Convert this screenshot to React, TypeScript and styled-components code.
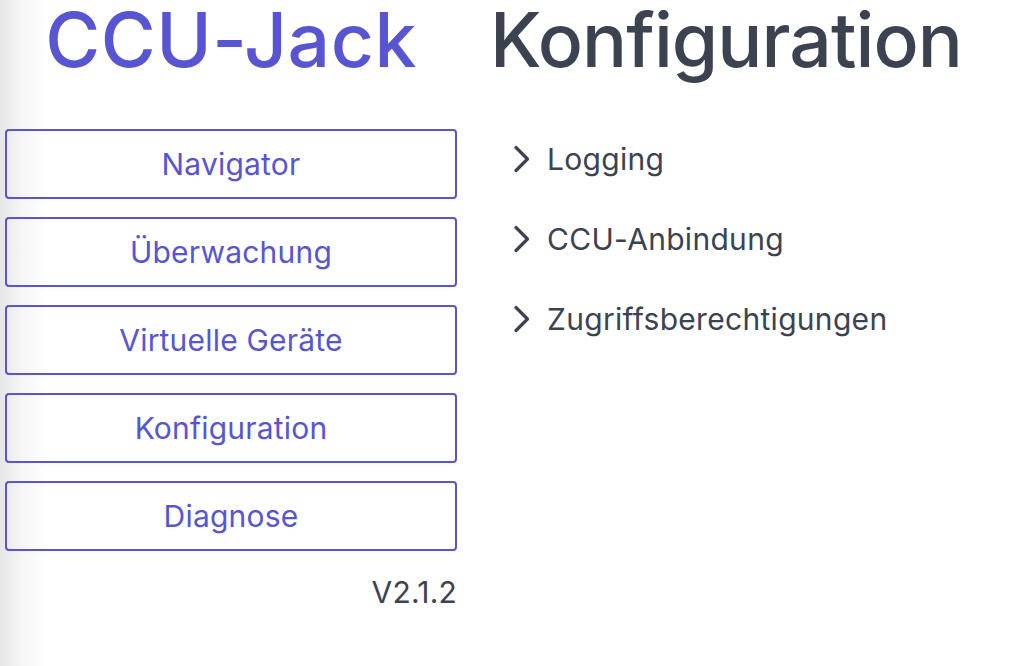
import React from "react";
import styled, { createGlobalStyle } from "styled-components";

const Global = createGlobalStyle`
  html, body {
    margin: 0;
    padding: 0;
    height: 100%;
  }
  body {
    font-family: Inter, "Noto Sans", sans-serif;
    background: linear-gradient(to right, #e6e6e6 0px, #f6f6f6 22px, #ffffff 48px);
    color: #3c4350;
    -webkit-font-smoothing: antialiased;
  }
`;

const Page = styled.div`
  display: flex;
  flex-direction: column;
  padding-left: 5px;
  min-height: 666px;
  box-sizing: border-box;
`;

const Header = styled.header`
  display: grid;
  grid-template-columns: 452px 1fr;
  column-gap: 33px;
  margin-top: -6px;
  margin-bottom: 43px;
`;

const Body = styled.main`
  display: grid;
  grid-template-columns: 452px 1fr;
  column-gap: 33px;
  align-items: start;
`;

const Title = styled.h1<{ $accent?: boolean }>`
  margin: 0;
  font-size: 75px;
  font-weight: 500;
  line-height: 92px;
  letter-spacing: ${(p) => (p.$accent ? "0.5px" : "-0.95px")};
  white-space: nowrap;
  color: ${(p) => (p.$accent ? "#5855d3" : "#3c4350")};
  text-align: ${(p) => (p.$accent ? "center" : "left")};
`;

const Sidebar = styled.nav`
  display: flex;
  flex-direction: column;
  gap: 18px;
`;

const NavButton = styled.button`
  display: flex;
  align-items: center;
  justify-content: center;
  height: 70px;
  padding: 0;
  box-sizing: border-box;
  border: 2px solid #5855d3;
  border-radius: 4px;
  background: transparent;
  color: #5855d3;
  font-family: Inter, "Noto Sans", sans-serif;
  font-size: 30px;
  letter-spacing: 0.2px;
  font-weight: 400;
  cursor: pointer;
`;

const Version = styled.div`
  margin-top: 23px;
  text-align: right;
  font-size: 30px;
  letter-spacing: 0.2px;
  color: #3c4350;
`;

const Sections = styled.div`
  display: flex;
  flex-direction: column;
  gap: 44px;
  padding: 12px 0 0 23px;
`;

const SectionRow = styled.div`
  display: flex;
  align-items: center;
  gap: 16px;
  height: 36px;
  font-size: 30px;
  letter-spacing: 0.3px;
  color: #3c4350;
`;

const Chevron = () => (
  <svg width="18" height="28" viewBox="0 0 18 28" fill="none">
    <path
      d="M3 2.5 L14.5 14 L3 25.5"
      stroke="#3c4350"
      strokeWidth="3.2"
      strokeLinecap="round"
      strokeLinejoin="round"
    />
  </svg>
);

const navItems = ["Navigator", "Überwachung", "Virtuelle Geräte", "Konfiguration", "Diagnose"];
const sections = ["Logging", "CCU-Anbindung", "Zugriffsberechtigungen"];

export default function App() {
  return (
    <>
      <Global />
      <Page>
        <Header>
          <Title $accent>CCU-Jack</Title>
          <Title>Konfiguration</Title>
        </Header>
        <Body>
          <div>
            <Sidebar>
              {navItems.map((n) => (
                <NavButton key={n}>{n}</NavButton>
              ))}
            </Sidebar>
            <Version>V2.1.2</Version>
          </div>
          <Sections>
            {sections.map((s) => (
              <SectionRow key={s}>
                <Chevron />
                <span>{s}</span>
              </SectionRow>
            ))}
          </Sections>
        </Body>
      </Page>
    </>
  );
}
